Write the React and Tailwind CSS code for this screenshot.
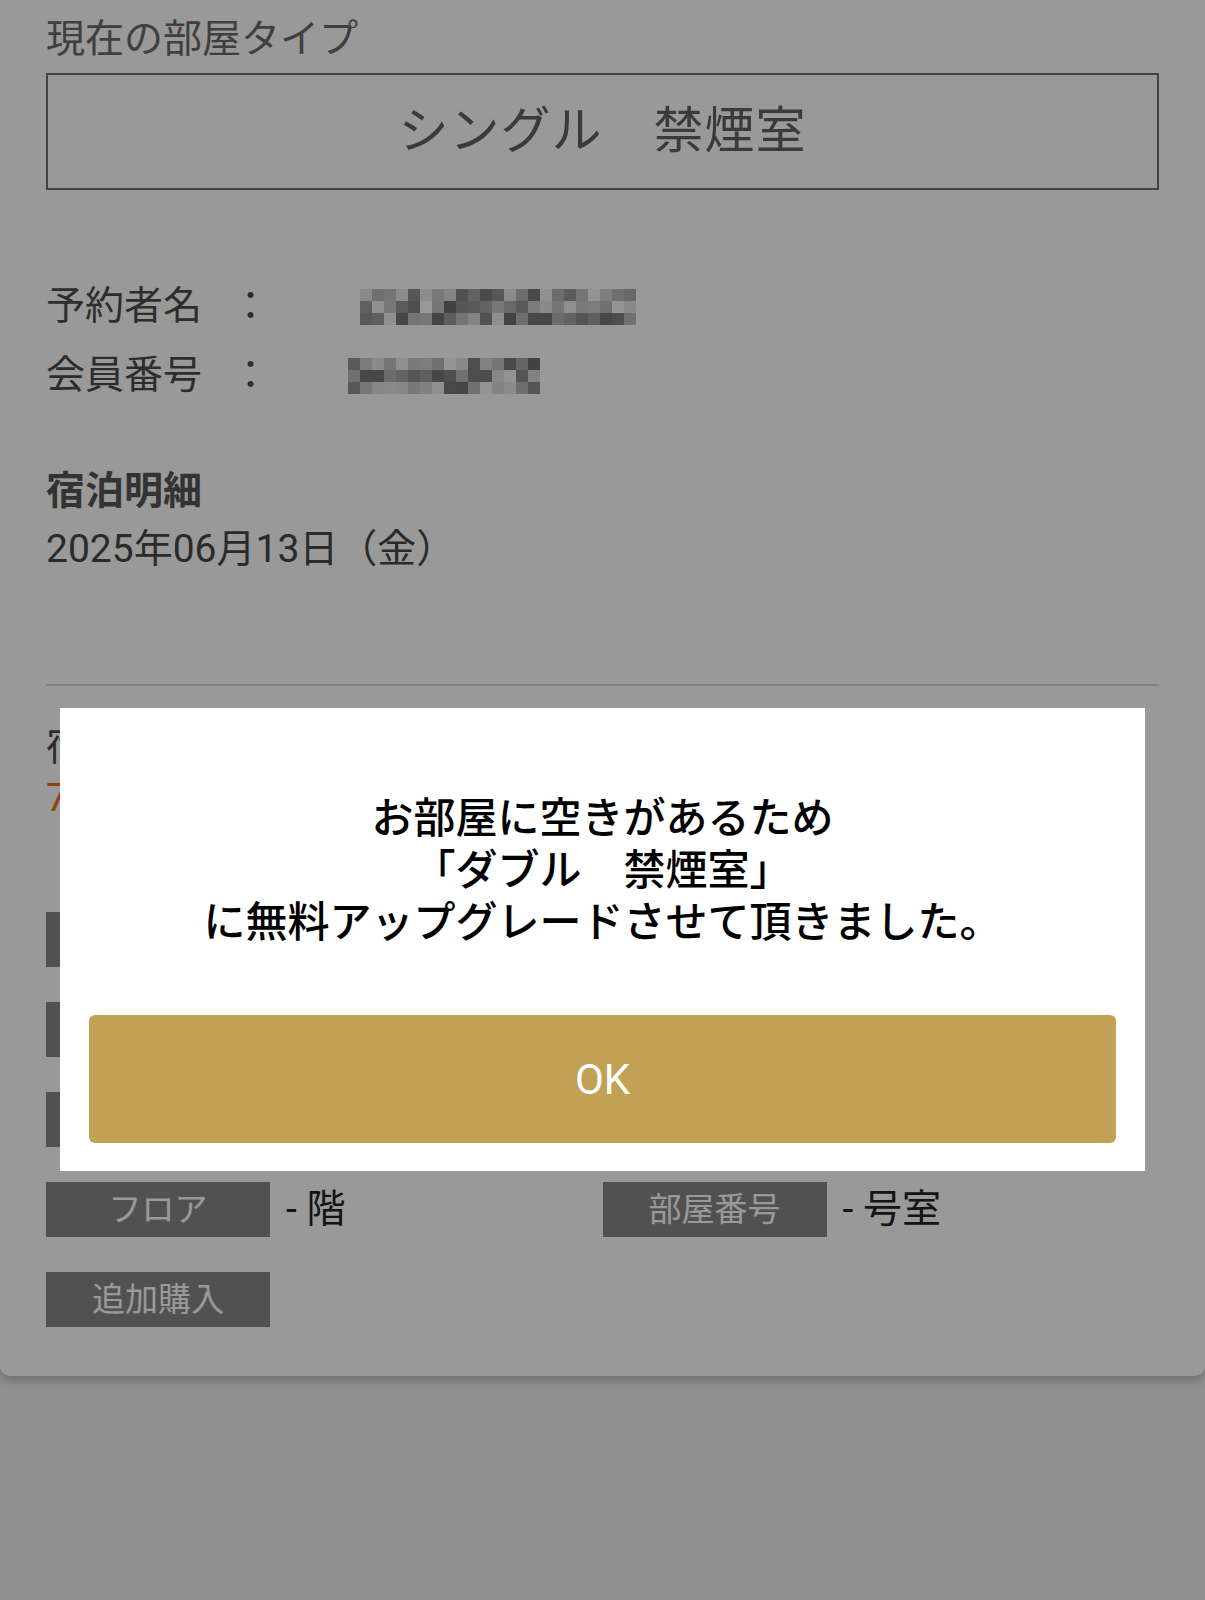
import React from 'react';

const rand = (n) => {
  const x = Math.sin(n * 12.9898 + 78.233) * 43758.5453;
  return x - Math.floor(x);
};

// pixelated (mosaic) placeholder for masked personal data
const Mosaic = ({ cols, seed }) => {
  const cells = [];
  for (let r = 0; r < 3; r++) {
    for (let c = 0; c < cols; c++) {
      const v = Math.floor(110 + rand(seed + r * 47 + c * 3) * 145);
      cells.push(<rect key={`${r}-${c}`} x={c * 12} y={r * 12} width="12" height="12" fill={`rgb(${v},${v},${v})`} />);
    }
  }
  return (
    <svg width={cols * 12} height="36" viewBox={`0 0 ${cols * 12} 36`}>
      {cells}
    </svg>
  );
};

const LabelBox = ({ label, value }) => (
  <div className="flex items-center h-[55px]">
    <div className="w-[224px] h-[55px] bg-[#888888] text-white text-[33px] leading-[55px] text-center">{label}</div>
    {value && <span className="ml-[16px] text-[39px] leading-[55px] text-[#222]">{value}</span>}
  </div>
);

const App = () => {
  // upper rows sit under the dialog, only their left edges show
  const boxRows = [
    [{ label: '', value: '' }, { label: '', value: '' }],
    [{ label: '', value: '' }, { label: '', value: '' }],
    [{ label: '', value: '' }, { label: '', value: '' }],
    [{ label: 'フロア', value: '- 階' }, { label: '部屋番号', value: '- 号室' }],
  ];

  return (
    <div className="relative min-h-[1600px] bg-[#eeeeee] font-['Roboto','Noto_Sans_CJK_JP',sans-serif]">
      {/* Page card */}
      <div className="bg-white rounded-b-[10px] shadow-[0_5px_10px_rgba(0,0,0,0.2)] px-[46px] pt-[12px] pb-[49px]">
        <p className="text-[39px] leading-[55px] text-[#6a6a6a]">現在の部屋タイプ</p>
        <div className="mt-[6px] h-[117px] border-2 border-[#707070] flex items-center justify-center text-[50px] text-[#626262] tracking-[1px]">
          シングル　禁煙室
        </div>

        <div className="mt-[82px] text-[39px] text-[#4c4c4c]">
          <div className="flex items-center h-[69px]">
            <span className="w-[185px]">予約者名</span>
            <span className="w-[39px] text-center">：</span>
            <span className="ml-[90px]"><Mosaic cols={23} seed={5} /></span>
          </div>
          <div className="flex items-center h-[69px]">
            <span className="w-[185px]">会員番号</span>
            <span className="w-[39px] text-center">：</span>
            <span className="ml-[78px]"><Mosaic cols={16} seed={91} /></span>
          </div>
        </div>

        <p className="mt-[52px] text-[39px] leading-[58px] font-bold text-[#555]">宿泊明細</p>
        <p className="text-[39px] leading-[58px] text-[#474747]">2025年06月13日（金）</p>

        <div className="mt-[106px] h-[2px] bg-[#dddddd]" />

        <p className="mt-[36px] text-[39px] leading-[51px] text-[#4c4c4c]">宿泊料金</p>
        <p className="text-[39px] leading-[51px] text-[#f26b1d]">7,200円</p>

        <div className="mt-[88px] flex flex-col gap-[35px]">
          {boxRows.map((row, i) => (
            <div key={i} className="grid grid-cols-2">
              {row.map((b, j) => (
                <LabelBox key={j} label={b.label} value={b.value} />
              ))}
            </div>
          ))}
          <div className="w-[224px] h-[55px] bg-[#888888] text-white text-[33px] leading-[55px] text-center">追加購入</div>
        </div>
      </div>

      {/* Overlay */}
      <div className="absolute inset-0 bg-black/40" />

      {/* Dialog */}
      <div className="absolute left-[60px] top-[708px] w-[1085px] h-[463px] bg-white px-[29px] pt-[85px] pb-[28px] flex flex-col">
        <div className="text-center text-[42px] leading-[52px] font-medium text-black">
          <p>お部屋に空きがあるため</p>
          <p>「ダブル　禁煙室」</p>
          <p>に無料アップグレードさせて頂きました。</p>
        </div>
        <button className="mt-auto h-[128px] w-full rounded-[6px] bg-[#c0a156] text-white text-[42px]">OK</button>
      </div>
    </div>
  );
};

export default App;
